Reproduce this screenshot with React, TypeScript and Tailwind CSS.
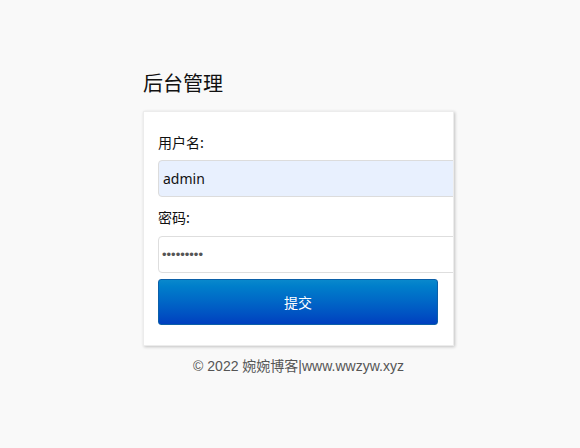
import React from "react";

export default function App() {
  return (
    <div className="min-h-[448px] w-full bg-[#f9f9f9] pt-[70px] font-['Liberation_Sans','Noto_Sans_CJK_SC',sans-serif]">
      <div className="ml-[143px] w-[311px]">
        <h1 className="text-[20px] leading-[26px] text-[#111] font-normal font-['Noto_Sans_CJK_SC',sans-serif]">
          后台管理
        </h1>
        <div className="mt-[15px] overflow-hidden border border-[#ececec] bg-white pt-[20px] pb-[20px] pl-[14px] shadow-[1px_1px_3px_rgba(0,0,0,0.22)]">
          <div className="h-[20px] text-[14px] leading-[20px] text-[#111] font-['Noto_Sans_CJK_SC',sans-serif]">
            用户名:
          </div>
          <div className="mt-[8px] flex h-[37px] w-[320px] items-center rounded-[4px] border border-[#dcdcdc] bg-[#e8f0fe] pl-[4px] text-[14px] text-[#111] font-['Noto_Sans',sans-serif]">
            admin
          </div>
          <div className="mt-[10px] h-[20px] text-[14px] leading-[20px] text-[#111] font-['Noto_Sans_CJK_SC',sans-serif]">
            密码:
          </div>
          <div className="mt-[9px] flex h-[37px] w-[320px] items-center rounded-[4px] border border-[#dedede] bg-white pl-[3px] text-[13px] text-[#555]">
            •••••••••
          </div>
          <button className="mt-[6px] flex h-[46px] w-[280px] items-center justify-center rounded-[3px] border border-[#0b5fa8] bg-gradient-to-b from-[#0a88cc] to-[#003fbf] text-[14px] text-white font-['Noto_Sans_CJK_SC',sans-serif]">
            提交
          </button>
        </div>
        <div className="mt-[10px] text-center text-[14px] leading-[20px] text-[#555]">
          © 2022 婉婉博客|www.wwzyw.xyz
        </div>
      </div>
    </div>
  );
}
